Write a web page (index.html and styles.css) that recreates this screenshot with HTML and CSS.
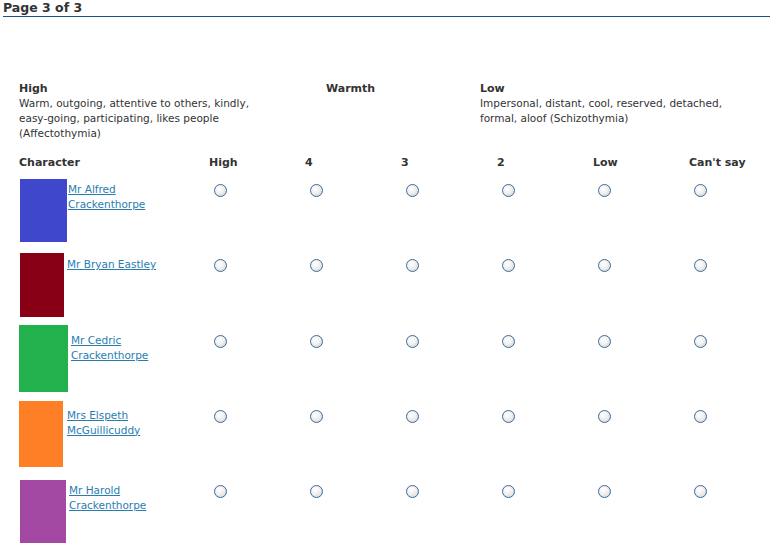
FILE: index.html
```html
<!DOCTYPE html>
<html>
<head>
<meta charset="utf-8">
<link rel="stylesheet" href="styles.css">
</head>
<body>
<div class="page">
  <h1 class="pager">Page 3 of 3</h1>

  <div class="scale">
    <div class="pole pole-high">
      <div class="label">High</div>
      <div class="desc">Warm, outgoing, attentive to others, kindly, easy-going, participating, likes people (Affectothymia)</div>
    </div>
    <div class="pole pole-name">
      <div class="label">Warmth</div>
    </div>
    <div class="pole pole-low">
      <div class="label">Low</div>
      <div class="desc">Impersonal, distant, cool, reserved, detached, formal, aloof (Schizothymia)</div>
    </div>
  </div>

  <div class="grid">
    <div class="head">Character</div>
    <div class="head">High</div>
    <div class="head">4</div>
    <div class="head">3</div>
    <div class="head">2</div>
    <div class="head">Low</div>
    <div class="head">Can't say</div>

    <div class="row">
      <div class="char">
        <div class="pic-box"><div class="pic" style="width:47px;height:63px;margin-left:1px;background:#3f48cc"></div></div>
        <a class="name" style="margin-left:1px" href="#">Mr Alfred Crackenthorpe</a>
      </div>
      <div class="cell"><input class="radio" type="radio" name="r1"></div>
      <div class="cell"><input class="radio" type="radio" name="r1"></div>
      <div class="cell"><input class="radio" type="radio" name="r1"></div>
      <div class="cell"><input class="radio" type="radio" name="r1"></div>
      <div class="cell"><input class="radio" type="radio" name="r1"></div>
      <div class="cell"><input class="radio" type="radio" name="r1"></div>
    </div>

    <div class="row">
      <div class="char">
        <div class="pic-box"><div class="pic" style="width:44px;height:64px;margin-left:1px;background:#880015"></div></div>
        <a class="name" style="margin-left:3px" href="#">Mr Bryan Eastley</a>
      </div>
      <div class="cell"><input class="radio" type="radio" name="r2"></div>
      <div class="cell"><input class="radio" type="radio" name="r2"></div>
      <div class="cell"><input class="radio" type="radio" name="r2"></div>
      <div class="cell"><input class="radio" type="radio" name="r2"></div>
      <div class="cell"><input class="radio" type="radio" name="r2"></div>
      <div class="cell"><input class="radio" type="radio" name="r2"></div>
    </div>

    <div class="row">
      <div class="char">
        <div class="pic-box"><div class="pic" style="width:49px;height:67px;background:#22b14c"></div></div>
        <a class="name" style="margin-left:3px" href="#">Mr Cedric Crackenthorpe</a>
      </div>
      <div class="cell"><input class="radio" type="radio" name="r3"></div>
      <div class="cell"><input class="radio" type="radio" name="r3"></div>
      <div class="cell"><input class="radio" type="radio" name="r3"></div>
      <div class="cell"><input class="radio" type="radio" name="r3"></div>
      <div class="cell"><input class="radio" type="radio" name="r3"></div>
      <div class="cell"><input class="radio" type="radio" name="r3"></div>
    </div>

    <div class="row">
      <div class="char">
        <div class="pic-box"><div class="pic" style="width:44px;height:66px;background:#ff7f27"></div></div>
        <a class="name" style="margin-left:4px" href="#">Mrs Elspeth McGuillicuddy</a>
      </div>
      <div class="cell"><input class="radio" type="radio" name="r4"></div>
      <div class="cell"><input class="radio" type="radio" name="r4"></div>
      <div class="cell"><input class="radio" type="radio" name="r4"></div>
      <div class="cell"><input class="radio" type="radio" name="r4"></div>
      <div class="cell"><input class="radio" type="radio" name="r4"></div>
      <div class="cell"><input class="radio" type="radio" name="r4"></div>
    </div>

    <div class="row">
      <div class="char">
        <div class="pic-box"><div class="pic" style="width:46px;height:63px;margin-left:1px;background:#a349a4"></div></div>
        <a class="name" style="margin-left:3px" href="#">Mr Harold Crackenthorpe</a>
      </div>
      <div class="cell"><input class="radio" type="radio" name="r5"></div>
      <div class="cell"><input class="radio" type="radio" name="r5"></div>
      <div class="cell"><input class="radio" type="radio" name="r5"></div>
      <div class="cell"><input class="radio" type="radio" name="r5"></div>
      <div class="cell"><input class="radio" type="radio" name="r5"></div>
      <div class="cell"><input class="radio" type="radio" name="r5"></div>
    </div>
  </div>
</div>
</body>
</html>
```

FILE: styles.css
```css
html, body {
  margin: 0;
  padding: 0;
  background: #ffffff;
}

body {
  font-family: "DejaVu Sans", Verdana, sans-serif;
  font-size: 10.5px;
  line-height: 15px;
  color: #333333;
  overflow: hidden;
}

.page {
  padding-left: 3px;
}

.pager {
  margin: 0;
  font-size: 12.5px;
  font-weight: bold;
  line-height: 16px;
  height: 16px;
  color: #333333;
  border-bottom: 1px solid #1b5282;
}

.scale {
  display: grid;
  grid-template-columns: 307px 154px 1fr;
  margin-top: 64px;
  padding-left: 16px;
}

.pole-high {
  padding-right: 50px;
}

.pole-low {
  padding-right: 12px;
}

.label {
  font-weight: bold;
  font-size: 11px;
}

.grid {
  display: grid;
  grid-template-columns: 190px repeat(5, 96px) 1fr;
  margin-top: 14px;
  padding-left: 16px;
}

.head {
  font-weight: bold;
  font-size: 11px;
  height: 25px;
}

.row {
  display: contents;
}

.char {
  display: flex;
  align-items: flex-start;
  height: 75.25px;
}

.pic-box {
  display: flex;
  align-items: flex-end;
  height: 61.5px;
  flex: none;
}

.pic {
  flex: none;
}

.name {
  color: #287db0;
  text-decoration: underline;
  margin-top: 2px;
  max-width: 100px;
}

.cell {
  height: 75.25px;
}

.radio {
  -webkit-appearance: none;
  appearance: none;
  box-sizing: border-box;
  width: 13px;
  height: 13px;
  margin: 4px 0 0 5px;
  border: 1px solid #3b6b98;
  border-radius: 50%;
  background: radial-gradient(circle at 40% 35%, #ffffff 0%, #f2f2f2 40%, #cfcfcf 100%);
  display: block;
}
```
